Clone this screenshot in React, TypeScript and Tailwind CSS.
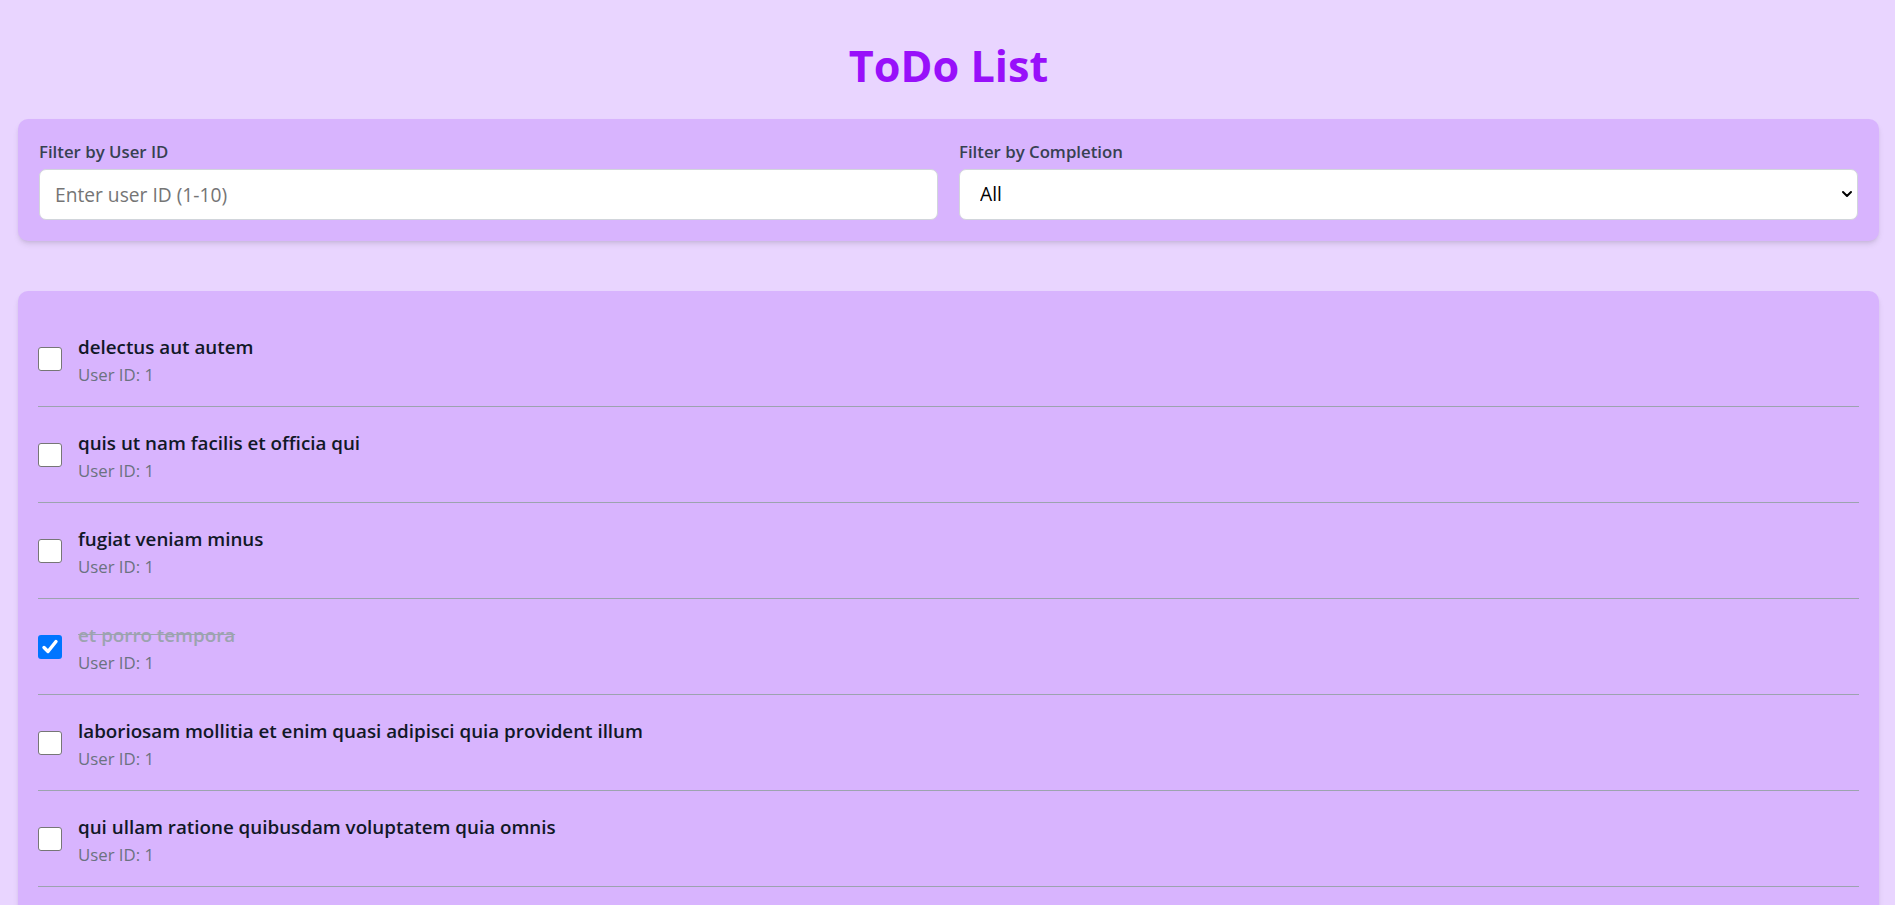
import React, { useState } from "react";

type Todo = { id: number; title: string; userId: number; completed: boolean };

const initial: Todo[] = [
  { id: 1, title: "delectus aut autem", userId: 1, completed: false },
  { id: 2, title: "quis ut nam facilis et officia qui", userId: 1, completed: false },
  { id: 3, title: "fugiat veniam minus", userId: 1, completed: false },
  { id: 4, title: "et porro tempora", userId: 1, completed: true },
  { id: 5, title: "laboriosam mollitia et enim quasi adipisci quia provident illum", userId: 1, completed: false },
  { id: 6, title: "qui ullam ratione quibusdam voluptatem quia omnis", userId: 1, completed: false },
  { id: 7, title: "illo expedita consequatur quia in", userId: 1, completed: false },
  { id: 8, title: "quo adipisci enim quam ut ab", userId: 1, completed: true },
  { id: 9, title: "molestiae perspiciatis ipsa", userId: 1, completed: false },
  { id: 10, title: "illo est ratione doloremque quia maiores aut", userId: 1, completed: true },
];

function Check({ checked, onClick }: { checked: boolean; onClick: () => void }) {
  return (
    <button
      type="button"
      onClick={onClick}
      className={
        checked
          ? "w-[24px] h-[24px] shrink-0 rounded-[3px] bg-[#0075ff] flex items-center justify-center"
          : "w-[24px] h-[24px] shrink-0 rounded-[3px] bg-white border border-[#767676]"
      }
    >
      {checked && (
        <svg width="20" height="20" viewBox="0 0 20 20" fill="none">
          <path d="M4 10.5 L8 14.5 L16 4.5" stroke="white" strokeWidth="3.4" strokeLinecap="round" strokeLinejoin="round" />
        </svg>
      )}
    </button>
  );
}

export default function App() {
  const [todos, setTodos] = useState<Todo[]>(initial);
  const font = { fontFamily: '"Open Sans", "Noto Sans", sans-serif' };
  return (
    <div className="min-h-screen bg-[#e9d5ff] pl-[18px] pr-[16px] pt-[42px] pb-[40px]" style={font}>
      <h1 className="text-center text-[43.2px] leading-[48px] font-bold text-[#9810fa] mb-[29px]">ToDo List</h1>

      <div className="bg-[#d8b4fe] rounded-[10px] shadow-md px-[21px] pt-[20px] pb-[21px] grid grid-cols-2 gap-[21px]">
        <div>
          <label className="block text-[16.8px] leading-[26px] font-semibold text-[#374151] mb-[4px]">Filter by User ID</label>
          <input
            type="text"
            placeholder="Enter user ID (1-10)"
            className="w-full h-[51px] bg-white border border-[#d1d5db] rounded-[7px] px-[15px] text-[19.2px] text-black placeholder:text-[#757575] outline-none"
          />
        </div>
        <div>
          <label className="block text-[16.8px] leading-[26px] font-semibold text-[#374151] mb-[4px]">Filter by Completion</label>
          <div className="relative">
            <select className="w-full h-[51px] bg-white border border-[#d1d5db] rounded-[7px] pl-[20px] pr-[40px] text-[19.2px] text-black appearance-none outline-none">
              <option>All</option>
              <option>Completed</option>
              <option>Incomplete</option>
            </select>
            <svg className="absolute right-[5px] top-[19px] pointer-events-none" width="12" height="12" viewBox="0 0 12 12" fill="none">
              <path d="M2 4 L6 8 L10 4" stroke="black" strokeWidth="2" strokeLinecap="round" strokeLinejoin="round" />
            </svg>
          </div>
        </div>
      </div>

      <div className="mt-[50px] bg-[#d8b4fe] rounded-[10px] shadow-md p-[20px]">
        {todos.map((t) => (
          <div key={t.id} className="h-[96px] flex items-center gap-[16px] border-b border-[#9ca3af]">
            <Check
              checked={t.completed}
              onClick={() => setTodos(todos.map((x) => (x.id === t.id ? { ...x, completed: !x.completed } : x)))}
            />
            <div className="pt-[2px]">
              <div
                className={
                  t.completed
                    ? "text-[18.8px] leading-[28px] font-semibold text-[#9ca3af] line-through"
                    : "text-[18.8px] leading-[28px] font-semibold text-[#111827]"
                }
              >
                {t.title}
              </div>
              <div className="text-[16.8px] leading-[24px] mt-[2px] text-[#6b7280]">User ID: {t.userId}</div>
            </div>
          </div>
        ))}
      </div>
    </div>
  );
}
